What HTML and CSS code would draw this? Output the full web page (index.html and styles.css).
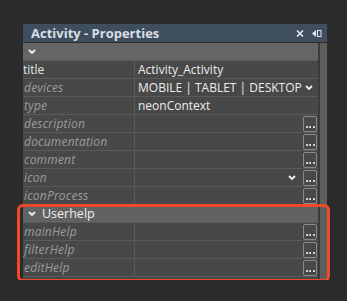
FILE: index.html
```html
<!DOCTYPE html>
<html>
<head>
<meta charset="utf-8">
<link rel="stylesheet" href="styles.css">
</head>
<body>
<div class="panel">
  <div class="titlebar">
    <span class="title">Activity - Properties</span>
    <span class="tools">
      <svg class="close" width="8" height="7" viewBox="0 0 8 7"><path d="M1 0.5 L7 6.5 M7 0.5 L1 6.5" stroke="#e4e8ec" stroke-width="1.6"/></svg>
      <svg class="dock" width="10" height="7" viewBox="0 0 10 7"><path d="M0 3.5 L4 0 L4 7 Z" fill="#e4e8ec"/><rect x="5.5" y="0.5" width="3.5" height="6" fill="none" stroke="#e4e8ec" stroke-width="1"/></svg>
    </span>
  </div>
  <div class="body">
    <div class="grid">
      <div class="group top"><svg class="chev" width="8" height="5" viewBox="0 0 8 5"><path d="M1 1 L4 4 L7 1" fill="none" stroke="#f0f0f0" stroke-width="1.8"/></svg></div>
      <div class="row"><div class="label plain">title</div><div class="value">Activity_Activity</div></div>
      <div class="row"><div class="label">devices</div><div class="value">MOBILE | TABLET | DESKTOP<svg class="chev dd" width="8" height="5" viewBox="0 0 8 5"><path d="M1 1 L4 4 L7 1" fill="none" stroke="#f0f0f0" stroke-width="1.8"/></svg></div></div>
      <div class="row"><div class="label">type</div><div class="value">neonContext</div></div>
      <div class="row"><div class="label">description</div><div class="value"><span class="btn"><i></i><i></i><i></i></span></div></div>
      <div class="row"><div class="label">documentation</div><div class="value"><span class="btn"><i></i><i></i><i></i></span></div></div>
      <div class="row"><div class="label">comment</div><div class="value"><span class="btn"><i></i><i></i><i></i></span></div></div>
      <div class="row"><div class="label">icon</div><div class="value"><svg class="chev icon-dd" width="8" height="5" viewBox="0 0 8 5"><path d="M1 1 L4 4 L7 1" fill="none" stroke="#f0f0f0" stroke-width="1.8"/></svg><span class="btn"><i></i><i></i><i></i></span></div></div>
      <div class="row"><div class="label">iconProcess</div><div class="value"><span class="btn"><i></i><i></i><i></i></span></div></div>
      <div class="group"><svg class="chev" width="8" height="5" viewBox="0 0 8 5"><path d="M1 1 L4 4 L7 1" fill="none" stroke="#f0f0f0" stroke-width="1.8"/></svg><span class="gname">Userhelp</span></div>
      <div class="row"><div class="label">mainHelp</div><div class="value"><span class="btn"><i></i><i></i><i></i></span></div></div>
      <div class="row"><div class="label">filterHelp</div><div class="value"><span class="btn"><i></i><i></i><i></i></span></div></div>
      <div class="row"><div class="label">editHelp</div><div class="value"><span class="btn"><i></i><i></i><i></i></span></div></div>
      <div class="tail"></div>
    </div>
    <div class="scroll"></div>
  </div>
  <div class="highlight"></div>
</div>
</body>
</html>
```

FILE: styles.css
```css
html, body {
  margin: 0;
  padding: 0;
  background: #2b2b2b;
}
body {
  font-family: "Open Sans", "DejaVu Sans", sans-serif;
  overflow: hidden;
}
.panel {
  position: relative;
  margin: 24px 0 0 23px;
  width: 304px;
}
.titlebar {
  height: 18px;
  background: #3e4e5e;
  border-bottom: 1px solid #2e2e2e;
  display: flex;
  align-items: center;
  padding-left: 8px;
  padding-right: 5px;
}
.title {
  color: #d9dfe5;
  font-weight: bold;
  font-size: 13px;
  line-height: 18px;
  flex: 1;
}
.tools {
  display: flex;
  align-items: center;
  gap: 8px;
}
.body {
  display: flex;
}
.grid {
  width: 295px;
  background: #484848;
}
.scroll {
  width: 7px;
  border-left: 2px solid #3b3b3b;
  background: #5d5d5d;
}
.group {
  height: 18px;
  box-sizing: border-box;
  border-top: 1px solid #555;
  background: #626262;
  display: flex;
  align-items: center;
  padding-left: 5px;
}
.group.top {
  height: 17px;
  border-top: none;
  background: #666;
}
.gname {
  color: #eeeeee;
  font-size: 12.5px;
  margin-left: 6px;
  line-height: 17px;
}
.row {
  display: grid;
  grid-template-columns: 112px 1fr;
  height: 18px;
  box-sizing: border-box;
  border-top: 1px solid #5a5a5a;
  font-size: 12px;
  line-height: 17px;
}
.label {
  border-right: 1px solid #5a5a5a;
  color: #9c9c9c;
  font-style: italic;
  padding-left: 1px;
  letter-spacing: 0.2px;
  white-space: nowrap;
  overflow: hidden;
}
.label.plain {
  font-style: normal;
  color: #e4e4e4;
  padding-left: 0;
  letter-spacing: 0;
}
.value {
  display: flex;
  align-items: center;
  padding-left: 3px;
  padding-right: 1px;
  color: #ebebeb;
  white-space: nowrap;
}
.chev {
  display: block;
}
.dd {
  margin-left: 3px;
}
.icon-dd {
  margin-left: auto;
  margin-right: 7px;
}
.btn {
  margin-left: auto;
  width: 14px;
  height: 16px;
  box-sizing: border-box;
  border: 1px solid #8a8a8a;
  border-radius: 2px;
  display: flex;
  align-items: flex-end;
  justify-content: center;
  gap: 1.5px;
  padding-bottom: 3px;
}
.icon-dd + .btn {
  margin-left: 0;
}
.btn i {
  display: block;
  width: 2px;
  height: 2px;
  background: #d0d0d0;
}
.tail {
  height: 3px;
  border-top: 1px solid #5a5a5a;
}
.highlight {
  position: absolute;
  left: -6px;
  top: 180px;
  width: 313px;
  height: 78px;
  box-sizing: border-box;
  border: 3px solid #f0482a;
  border-radius: 6px;
}
```
